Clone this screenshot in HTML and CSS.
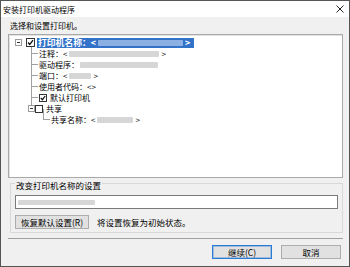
FILE: index.html
```html
<!DOCTYPE html>
<html lang="zh-CN">
<head>
    <meta charset="UTF-8">
    <title>安装打印机驱动程序</title>
    <link rel="stylesheet" href="styles.css">
</head>
<body>
    <div class="window">
        <div class="titlebar">
            <span class="title">安装打印机驱动程序</span>
            <svg class="close" width="8" height="8" viewBox="0 0 8 8">
                <path d="M0.5 0.5 L7.5 7.5 M7.5 0.5 L0.5 7.5" stroke="#222" stroke-width="1"/>
            </svg>
        </div>
        <div class="content">
            <div class="prompt">选择和设置打印机。</div>
            <div class="tree">
                <div class="row root">
                    <span class="expander"></span>
                    <span class="check">
                        <svg width="7" height="7" viewBox="0 0 7 7"><polyline points="1,3.5 2.8,5.5 6,1.2" fill="none" stroke="#111" stroke-width="1.3"/></svg>
                    </span>
                    <span class="selected">打印机名称：&lt;<span class="mask mask-sel"></span>&gt;</span>
                </div>
                <div class="row child">注释：&lt;<span class="mask mask-note"></span>&gt;</div>
                <div class="row child">驱动程序：<span class="mask mask-driver"></span></div>
                <div class="row child">端口：&lt;<span class="mask mask-port"></span>&gt;</div>
                <div class="row child">使用者代码：&lt;&gt;</div>
                <div class="row child">
                    <span class="check small">
                        <svg width="6" height="6" viewBox="0 0 6 6"><polyline points="0.8,3 2.4,4.7 5.2,1" fill="none" stroke="#111" stroke-width="1.2"/></svg>
                    </span>
                    <span class="item">默认打印机</span>
                </div>
                <div class="row share">
                    <span class="expander"></span>
                    <span class="check small"></span>
                    <span class="item">共享</span>
                </div>
                <div class="row share-name">共享名称：&lt;<span class="mask mask-share"></span>&gt;</div>
            </div>

            <div class="group">
                <div class="group-label">改变打印机名称的设置</div>
                <div class="input"><span class="mask mask-input"></span></div>
                <div class="reset-row">
                    <button class="btn reset">恢复默认设置(R)</button>
                    <span class="reset-note">将设置恢复为初始状态。</span>
                </div>
            </div>

            <div class="separator"></div>

            <div class="actions">
                <button class="btn primary">继续(C)</button>
                <button class="btn">取消</button>
            </div>
        </div>
    </div>
</body>
</html>
```

FILE: styles.css
```css
* {
    box-sizing: border-box;
}
body {
    margin: 0;
    font-family: "Noto Sans CJK SC", "Noto Sans", sans-serif;
    font-size: 8px;
    color: #000;
}
.window {
    width: 350px;
    height: 267px;
    border: 1px solid #555;
    background: #f0f0f0;
    display: flex;
    flex-direction: column;
}
.titlebar {
    height: 16px;
    flex: none;
    background: #fff;
    display: flex;
    align-items: center;
    justify-content: space-between;
    padding: 0 5px 0 2px;
}
.content {
    flex: 1;
    padding: 0 6px 0 7px;
    display: flex;
    flex-direction: column;
}
.prompt {
    height: 17px;
    line-height: 17px;
    padding-left: 2px;
}

/* tree view */
.tree {
    height: 144px;
    flex: none;
    background: #fff;
    border: 1px solid #a9a9a9;
    box-shadow: inset 1px 1px 0 #e2e2e2;
    padding-top: 2px;
}
.row {
    height: 11px;
    display: flex;
    align-items: center;
    white-space: nowrap;
}
.root {
    padding-left: 6px;
    background: linear-gradient(#a0a0a0, #a0a0a0) 22px 100% / 1px 50% no-repeat;
}
.child {
    padding-left: 30px;
    background:
        linear-gradient(#a0a0a0, #a0a0a0) 22px 0 / 1px 100% no-repeat,
        linear-gradient(#a0a0a0, #a0a0a0) 22px 50% / 7px 1px no-repeat;
}
.share {
    padding-left: 19px;
    background:
        linear-gradient(#a0a0a0, #a0a0a0) 22px 0 / 1px 50% no-repeat,
        linear-gradient(#a0a0a0, #a0a0a0) 26px 50% / 4px 1px no-repeat,
        linear-gradient(#a0a0a0, #a0a0a0) 34px 100% / 1px 50% no-repeat;
}
.share .check {
    margin-left: 4px;
}
.share-name {
    padding-left: 42px;
    background:
        linear-gradient(#a0a0a0, #a0a0a0) 34px 0 / 1px 50% no-repeat,
        linear-gradient(#a0a0a0, #a0a0a0) 34px 50% / 7px 1px no-repeat;
}
.expander {
    width: 7px;
    height: 7px;
    border: 1px solid #9a9a9a;
    background: linear-gradient(#333, #333) center / 3px 1px no-repeat #fff;
}
.check {
    width: 9px;
    height: 9px;
    margin-left: 4px;
    border: 1px solid #333;
    background: #fff;
    display: flex;
    align-items: center;
    justify-content: center;
}
.check.small {
    width: 8px;
    height: 8px;
    margin-left: 0;
}
.item {
    margin-left: 3px;
}
.selected {
    margin-left: 2px;
    height: 10px;
    line-height: 10px;
    padding: 0 4px 0 1px;
    background: #3272c9;
    color: #fff;
    font-weight: bold;
    font-size: 8.8px;
    display: flex;
    align-items: center;
}
.mask {
    display: inline-block;
    height: 6px;
    margin: 0 2px;
    background: #d6d6d6;
    border-radius: 1px;
    filter: blur(0.6px);
}
.mask-sel {
    width: 85px;
    background: #8db0e3;
}
.mask-note {
    width: 90px;
}
.mask-driver {
    width: 78px;
    margin-left: 1px;
}
.mask-port {
    width: 22px;
}
.mask-share {
    width: 36px;
}
.mask-input {
    width: 77px;
    height: 5px;
    margin: 0;
}

/* name group */
.group {
    margin: 5px 0 0 2px;
    height: 50px;
    flex: none;
    border: 1px solid #d8d8d8;
    padding: 0 4px;
    font-size: 8.5px;
}
.group-label {
    margin-top: -4px;
    width: fit-content;
    height: 11px;
    line-height: 11px;
    padding: 0 1px;
    background: #f0f0f0;
}
.input {
    margin-top: 4px;
    height: 14px;
    border: 1px solid #7a7a7a;
    background: #fff;
    display: flex;
    align-items: center;
    padding-left: 2px;
}
.reset-row {
    margin-top: 6px;
    display: flex;
    align-items: center;
}
.btn {
    height: 14px;
    border: 1px solid #adadad;
    background: #e1e1e1;
    font-family: inherit;
    font-size: 8.5px;
    line-height: 12px;
    padding: 0;
    color: #000;
}
.reset {
    width: 74px;
}
.reset-note {
    margin-left: 8px;
}
.separator {
    margin-top: 5px;
    height: 1px;
    background: #a0a0a0;
}
.actions {
    display: flex;
    justify-content: flex-end;
    gap: 9px;
    margin: 6px 2px 0 0;
}
.actions .btn {
    width: 60px;
}
.btn.primary {
    border-color: #2a7bd6;
    box-shadow: inset 0 0 0 1px rgba(42, 123, 214, 0.35);
}
```
